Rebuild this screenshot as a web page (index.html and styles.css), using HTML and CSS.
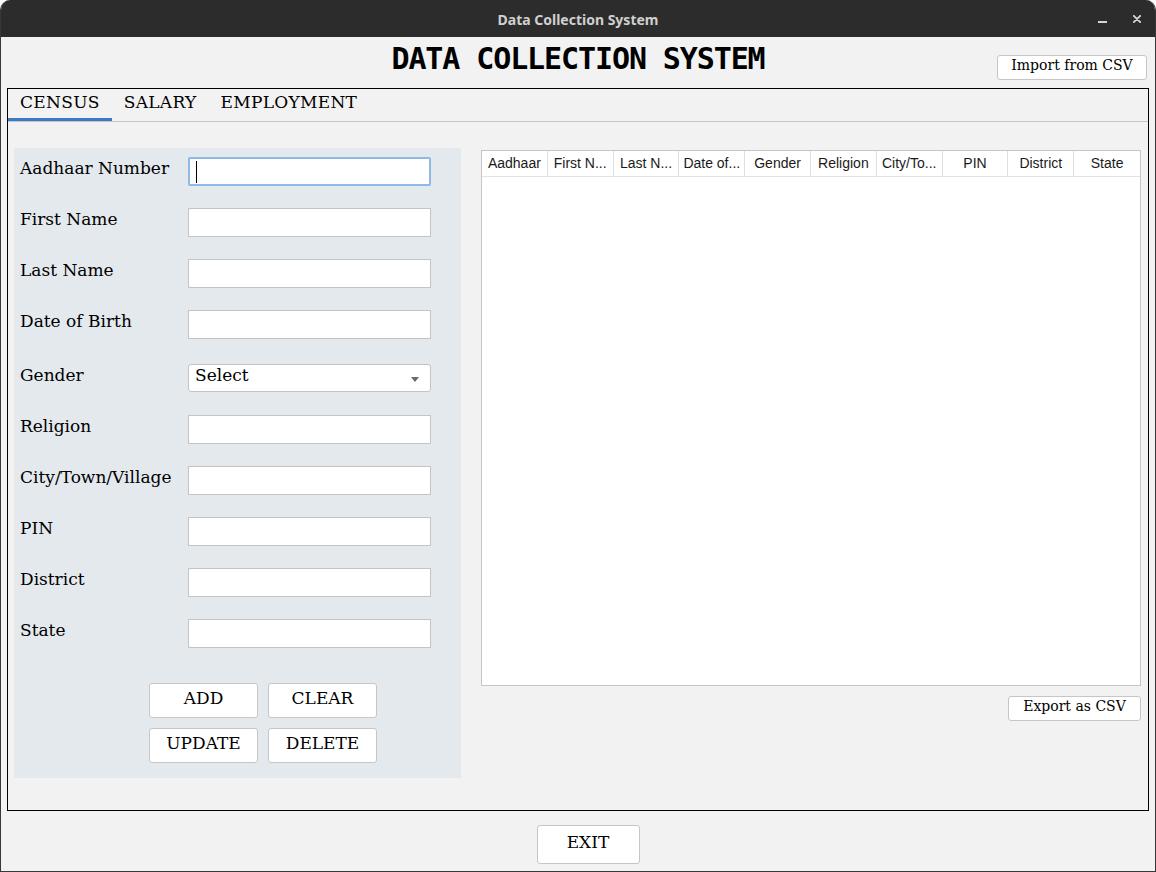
FILE: index.html
```html
<!DOCTYPE html>
<html lang="en">
<head>
<meta charset="utf-8">
<title>Data Collection System</title>
<link rel="stylesheet" href="styles.css">
</head>
<body>
<div class="window">
  <div class="titlebar">
    <div class="tb-side"></div>
    <div class="tb-title">Data Collection System</div>
    <div class="tb-side tb-controls">
      <svg class="tb-min" width="9" height="2" viewBox="0 0 9 2"><rect x="0" y="0" width="9" height="2" fill="#d6d6d6"/></svg>
      <svg class="tb-close" width="8" height="8" viewBox="0 0 8 8"><path d="M0.8 0.8 L7.2 7.2 M7.2 0.8 L0.8 7.2" stroke="#d6d6d6" stroke-width="1.8" stroke-linecap="round"/></svg>
    </div>
  </div>

  <div class="app">
    <header class="app-header">
      <div></div>
      <h1 class="app-title">DATA COLLECTION SYSTEM</h1>
      <div class="hdr-right"><button class="btn btn-small btn-import">Import from CSV</button></div>
    </header>

    <section class="notebook">
      <nav class="tabs">
        <span class="tab active">CENSUS</span>
        <span class="tab">SALARY</span>
        <span class="tab">EMPLOYMENT</span>
      </nav>

      <div class="tab-body">
        <form class="form-panel">
          <div class="fields">
            <div class="row">
              <label class="lbl">Aadhaar Number</label>
              <div class="field field-focus"><span class="caret"></span></div>
            </div>
            <div class="row"><label class="lbl">First Name</label><div class="field"></div></div>
            <div class="row"><label class="lbl">Last Name</label><div class="field"></div></div>
            <div class="row"><label class="lbl">Date of Birth</label><div class="field"></div></div>
            <div class="row row-select">
              <label class="lbl">Gender</label>
              <div class="select">
                <span class="select-text">Select</span>
                <svg class="select-arrow" width="8" height="5" viewBox="0 0 8 5"><path d="M0 0 L8 0 L4 5 Z" fill="#6a6a6a"/></svg>
              </div>
            </div>
            <div class="row"><label class="lbl">Religion</label><div class="field"></div></div>
            <div class="row"><label class="lbl">City/Town/Village</label><div class="field"></div></div>
            <div class="row"><label class="lbl">PIN</label><div class="field"></div></div>
            <div class="row"><label class="lbl">District</label><div class="field"></div></div>
            <div class="row"><label class="lbl">State</label><div class="field"></div></div>
          </div>
          <div class="actions">
            <button type="button" class="btn btn-action">ADD</button>
            <button type="button" class="btn btn-action">CLEAR</button>
            <button type="button" class="btn btn-action">UPDATE</button>
            <button type="button" class="btn btn-action">DELETE</button>
          </div>
        </form>

        <div class="table-area">
          <div class="table">
            <div class="thead">
              <div class="th">Aadhaar</div>
              <div class="th">First N...</div>
              <div class="th">Last N...</div>
              <div class="th">Date of...</div>
              <div class="th">Gender</div>
              <div class="th">Religion</div>
              <div class="th">City/To...</div>
              <div class="th">PIN</div>
              <div class="th">District</div>
              <div class="th">State</div>
            </div>
            <div class="tbody"></div>
          </div>
          <div class="export-row"><button class="btn btn-small btn-export">Export as CSV</button></div>
        </div>
      </div>
    </section>

    <footer class="app-footer">
      <button class="btn btn-exit">EXIT</button>
    </footer>
  </div>
</div>
</body>
</html>
```

FILE: styles.css
```css
html, body {
  margin: 0;
  padding: 0;
  background: #ffffff;
}

body {
  width: 1156px;
  height: 872px;
  overflow: hidden;
}

.window {
  box-sizing: border-box;
  width: 1156px;
  height: 872px;
  border-radius: 10px 10px 0 0;
  overflow: hidden;
  background: #f2f2f2;
  border: 1px solid #383838;
  border-top: none;
  display: flex;
  flex-direction: column;
}

/* Title bar */
.titlebar {
  height: 37px;
  flex: 0 0 37px;
  background: #2c2c2c;
  display: grid;
  grid-template-columns: 1fr auto 1fr;
  align-items: start;
  margin: 0 -1px;
}

.tb-title {
  font-family: "Noto Sans", "DejaVu Sans", sans-serif;
  font-weight: 700;
  font-size: 14px;
  line-height: 19px;
  color: #d0d0d0;
  padding-top: 10px;
}

.tb-controls {
  display: flex;
  justify-content: flex-end;
  align-items: flex-start;
  padding-right: 15px;
}

.tb-min {
  display: block;
  margin-top: 21px;
}

.tb-close {
  display: block;
  margin-top: 15px;
  margin-left: 26px;
}

/* App area */
.app {
  flex: 1;
  display: flex;
  flex-direction: column;
}

.app-header {
  height: 51px;
  display: grid;
  grid-template-columns: 1fr auto 1fr;
  align-items: start;
}

.app-title {
  margin: 0;
  padding-top: 4px;
  font-family: "DejaVu Sans Mono", monospace;
  font-weight: 700;
  font-size: 30px;
  line-height: 35px;
  letter-spacing: -1.1px;
  color: #000;
  white-space: nowrap;
}

.hdr-right {
  display: flex;
  justify-content: flex-end;
  padding-right: 8px;
  padding-top: 18px;
}

/* Buttons */
.btn {
  box-sizing: border-box;
  background: #ffffff;
  border: 1px solid #c6c6c6;
  border-radius: 3px;
  color: #000;
  font-family: "DejaVu Serif", serif;
  margin: 0;
  cursor: pointer;
}

.btn-small {
  font-size: 14px;
  line-height: 17px;
  height: 25px;
  padding: 1px 0 0;
  display: flex;
  justify-content: center;
  align-items: flex-start;
}

.btn-import {
  width: 150px;
}

.btn-export {
  width: 133px;
  height: 25px;
}

.btn-action {
  width: 109px;
  height: 35px;
  font-size: 17px;
  line-height: 20px;
  padding: 4px 0 0;
  display: flex;
  justify-content: center;
  align-items: flex-start;
}

.btn-exit {
  width: 103px;
  height: 39px;
  font-size: 17px;
  line-height: 20px;
  padding: 6px 0 0;
  display: flex;
  justify-content: center;
  align-items: flex-start;
}

/* Notebook */
.notebook {
  box-sizing: border-box;
  margin: 0 6px;
  height: 723px;
  border: 1px solid #000;
  display: flex;
  flex-direction: column;
}

.tabs {
  height: 32px;
  flex: 0 0 32px;
  border-bottom: 1px solid #c6c6c6;
  display: flex;
  align-items: stretch;
}

.tab {
  box-sizing: border-box;
  padding: 3px 12px 0;
  font-family: "DejaVu Serif", serif;
  font-size: 17px;
  line-height: 20px;
  letter-spacing: 0.3px;
  color: #000;
  border-bottom: 3px solid transparent;
}

.tab.active {
  border-bottom-color: #3b7bc4;
}

.tab-body {
  display: flex;
  align-items: flex-start;
  padding: 26px 7px 0 6px;
}

/* Form panel */
.form-panel {
  box-sizing: border-box;
  width: 447px;
  margin: 0;
  background: #e4e9ee;
  padding: 9px 0 15px 6px;
}

.fields {
  display: flex;
  flex-direction: column;
  gap: 22px;
}

.row {
  display: flex;
  align-items: flex-start;
}

.row-select {
  margin-top: 3px;
  margin-bottom: 1px;
}

.lbl {
  width: 168px;
  flex: 0 0 168px;
  font-family: "DejaVu Serif", serif;
  font-size: 17px;
  line-height: 20px;
  color: #000;
  padding-top: 1px;
  white-space: nowrap;
}

.field {
  box-sizing: border-box;
  position: relative;
  width: 243px;
  height: 29px;
  background: #ffffff;
  border: 1px solid #c4c4c4;
}

.field-focus {
  border: 2px solid #91b9e5;
  border-radius: 2px;
}

.caret {
  position: absolute;
  left: 6px;
  top: 2px;
  width: 1px;
  height: 22px;
  background: #000;
}

.select {
  box-sizing: border-box;
  width: 243px;
  height: 28px;
  background: #ffffff;
  border: 1px solid #c4c4c4;
  border-radius: 3px;
  display: flex;
  justify-content: space-between;
  align-items: flex-start;
  padding: 0 11px 0 6px;
}

.select-text {
  font-family: "DejaVu Serif", serif;
  font-size: 17px;
  line-height: 20px;
  color: #000;
}

.select-arrow {
  display: block;
  margin-top: 12px;
}

.actions {
  margin-top: 35px;
  margin-left: 129px;
  display: grid;
  grid-template-columns: 109px 109px;
  column-gap: 10px;
  row-gap: 10px;
}

/* Table */
.table-area {
  margin-left: 20px;
  margin-top: 2px;
  flex: 1;
  display: flex;
  flex-direction: column;
}

.table {
  box-sizing: border-box;
  height: 536px;
  background: #ffffff;
  border: 1px solid #c6c6c6;
  display: flex;
  flex-direction: column;
}

.thead {
  display: grid;
  grid-template-columns: repeat(10, 1fr);
  height: 25px;
  border-bottom: 1px solid #e2e2e2;
}

.th {
  border-right: 1px solid #e0e0e0;
  font-family: "Liberation Sans", Arial, sans-serif;
  font-size: 14px;
  line-height: 24px;
  color: #1a1a1a;
  text-align: center;
  white-space: nowrap;
  overflow: hidden;
}

.th:last-child {
  border-right: none;
}

.tbody {
  flex: 1;
}

.export-row {
  display: flex;
  justify-content: flex-end;
  margin-top: 10px;
}

/* Footer */
.app-footer {
  display: flex;
  justify-content: center;
  padding: 14px 0 0 20px;
}
```
